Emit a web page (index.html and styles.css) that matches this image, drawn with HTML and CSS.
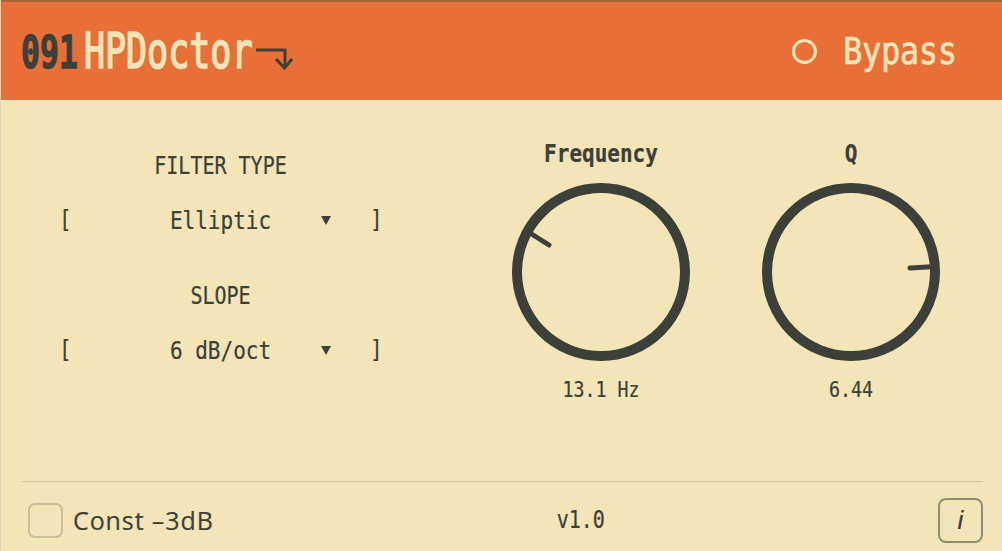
FILE: index.html
```html
<!DOCTYPE html>
<html lang="en">
<head>
  <meta charset="UTF-8">
  <title>091 HPDoctor</title>
  <link rel="stylesheet" href="styles.css">
</head>
<body>

  <header class="header">
    <div class="title">
      <span class="tall-title"><b class="num">091</b>HPDoctor</span>
      <svg class="hp-icon" width="37" height="24" viewBox="0 0 37 24">
        <path d="M0 4H29V22M20 13L28.500 22L36 13" fill="none" stroke="#3c4038" stroke-width="3"/>
      </svg>
    </div>
    <div class="bypass">
      <span class="led"></span>
      <span class="bypass-text">Bypass</span>
    </div>
  </header>

  <main class="main">
    <section class="selects">
      <div class="group">
        <div class="label"><span class="tall">FILTER TYPE</span></div>
        <div class="select">
          <span class="tall-big">[</span>
          <span class="select-value"><span class="tall">Elliptic</span></span>
          <span class="caret"></span>
          <span class="tall-big">]</span>
        </div>
      </div>
      <div class="group">
        <div class="label"><span class="tall">SLOPE</span></div>
        <div class="select">
          <span class="tall-big">[</span>
          <span class="select-value"><span class="tall">6 dB/oct</span></span>
          <span class="caret"></span>
          <span class="tall-big">]</span>
        </div>
      </div>
    </section>

    <section class="knobs">
      <div class="knob">
        <div class="knob-name"><span class="tall">Frequency</span></div>
        <svg width="178" height="178" viewBox="0 0 178 178">
          <circle cx="89" cy="89" r="84" fill="none" stroke="#3c4038" stroke-width="10"/>
          <path d="M18 50L37 62" stroke="#3c4038" stroke-width="5" stroke-linecap="round"/>
        </svg>
        <div class="knob-value"><span class="tall">13.1 Hz</span></div>
      </div>
      <div class="knob">
        <div class="knob-name"><span class="tall">Q</span></div>
        <svg width="178" height="178" viewBox="0 0 178 178">
          <circle cx="89" cy="89" r="84" fill="none" stroke="#3c4038" stroke-width="10"/>
          <path d="M148 85L174 83.500" stroke="#3c4038" stroke-width="5" stroke-linecap="round"/>
        </svg>
        <div class="knob-value"><span class="tall">6.44</span></div>
      </div>
    </section>
  </main>

  <footer class="footer">
    <div class="footer-row">
      <span class="checkbox"></span>
      <span class="const">Const –3dB</span>
      <span class="version"><span class="tall">v1.0</span></span>
      <span class="info">i</span>
    </div>
  </footer>

</body>
</html>
```

FILE: styles.css
```css
body {
  margin: 0;
  height: 551px;
  overflow: hidden;
  display: flex;
  flex-direction: column;
  background-color: #f3e5b8;
  color: #3c4038;
  font-family: 'DejaVu Sans Mono', monospace;
  border-left: 1px solid #e0dac4;
  -webkit-text-stroke: 0.2px;
}

.tall {
  display: inline-block;
  transform: scaleY(1.2);
}

.header {
  height: 98px;
  flex: none;
  display: flex;
  align-items: center;
  justify-content: space-between;
  padding: 0 45px 0 20px;
  background-color: #e87038;
  border-top: 2px solid #ab6238;
}

.title {
  display: flex;
  align-items: center;
}

.tall-title {
  display: inline-block;
  font-size: 35px;
  color: #f3e5b8;
  transform: scaleY(1.4);
  transform-origin: left center;
  white-space: nowrap;
  -webkit-text-stroke: 1.2px;
}

.num {
  color: #3c4038;
  font-size: 31.500px;
  margin-right: 6px;
  -webkit-text-stroke: 0.9px;
}

.hp-icon {
  margin: 13px 0 0 4px;
}

.bypass {
  display: flex;
  align-items: center;
  gap: 26px;
  color: #f3e5b8;
}

.led {
  width: 19px;
  height: 19px;
  border: 3px solid #f3e5b8;
  border-radius: 50%;
}

.bypass-text {
  display: inline-block;
  font-size: 31.500px;
  transform: scaleY(1.2);
  -webkit-text-stroke: 0.6px;
}

.main {
  flex: 1;
  display: flex;
  padding-left: 58px;
}

.selects {
  width: 323px;
  padding-top: 52px;
  display: flex;
  flex-direction: column;
  gap: 42px;
}

.group {
  display: flex;
  flex-direction: column;
  gap: 20px;
}

.label {
  height: 28px;
  line-height: 28px;
  text-align: center;
  font-size: 20px;
}

.select {
  height: 40px;
  display: flex;
  align-items: center;
  font-size: 21px;
}

.tall-big {
  display: inline-block;
  width: 10px;
  font-size: 21px;
  transform: scaleY(1.2);
}

.select-value {
  width: 303px;
  padding-top: 1px;
  text-align: center;
}

.caret {
  margin: 0 39px 0 -51px;
  width: 0;
  height: 0;
  border-left: 5.500px solid transparent;
  border-right: 5.500px solid transparent;
  border-top: 9px solid #3c4038;
}

.knobs {
  margin-left: 130px;
  padding-top: 40px;
  display: flex;
  gap: 72px;
}

.knob {
  width: 178px;
  display: flex;
  flex-direction: column;
  align-items: center;
  gap: 15px;
}

.knob-name {
  height: 28px;
  line-height: 28px;
  font-size: 21px;
  font-weight: bold;
}

.knob-value {
  height: 28px;
  line-height: 28px;
  font-size: 18.300px;
}

.footer {
  flex: none;
  height: 70px;
  padding: 0 19px 0 21px;
}

.footer-row {
  box-sizing: border-box;
  height: 69px;
  border-top: 1px solid #cfc49c;
  display: flex;
  align-items: center;
  padding: 8px 0 0 6px;
}

.checkbox {
  width: 31px;
  height: 31px;
  border: 2px solid #c9be9c;
  border-radius: 7px;
}

.const {
  margin-left: 10px;
  font-family: 'Open Sans', sans-serif;
  font-size: 25px;
  letter-spacing: 0.9px;
}

.version {
  margin-left: 343px;
  font-size: 20px;
}

.info {
  margin-left: auto;
  width: 41px;
  height: 41px;
  line-height: 41px;
  text-align: center;
  border: 2px solid #8f8d75;
  border-radius: 8px;
  font-family: 'Liberation Sans', sans-serif;
  font-style: italic;
  font-size: 26px;
}
```
